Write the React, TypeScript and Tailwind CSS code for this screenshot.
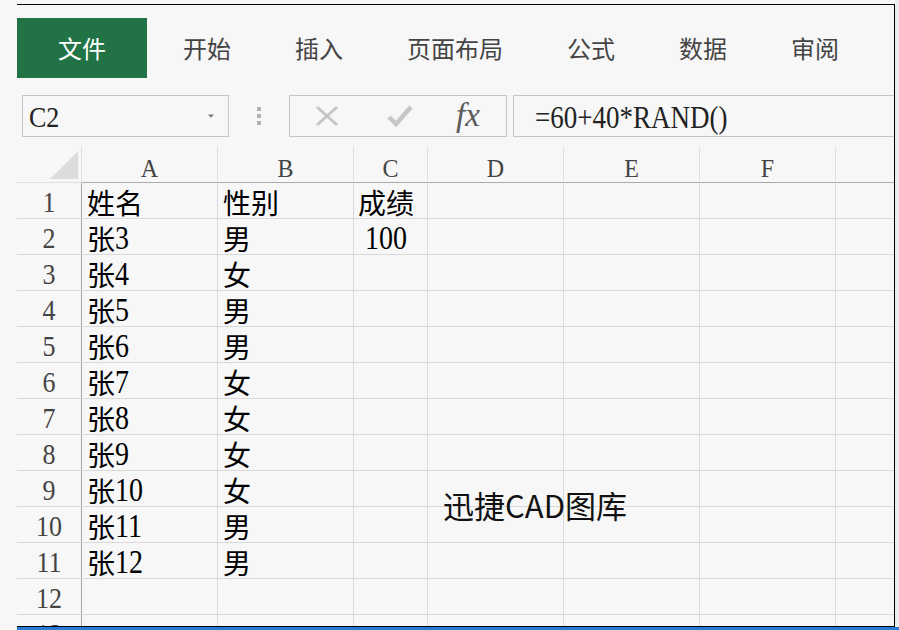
import React from "react";

const SERIF = { fontFamily: '"Liberation Serif", "Noto Sans CJK SC", serif' };

const tabs: { label: string; w: string }[] = [
  { label: "开始", w: "w-[120px]" },
  { label: "插入", w: "w-[104px]" },
  { label: "页面布局", w: "w-[168px]" },
  { label: "公式", w: "w-[104px]" },
  { label: "数据", w: "w-[120px]" },
  { label: "审阅", w: "w-[104px]" },
];

const rows: [string, string, string, string][] = [
  ["1", "姓名", "性别", "成绩"],
  ["2", "张3", "男", "100"],
  ["3", "张4", "女", ""],
  ["4", "张5", "男", ""],
  ["5", "张6", "男", ""],
  ["6", "张7", "女", ""],
  ["7", "张8", "女", ""],
  ["8", "张9", "女", ""],
  ["9", "张10", "女", ""],
  ["10", "张11", "男", ""],
  ["11", "张12", "男", ""],
  ["12", "", "", ""],
  ["13", "", "", ""],
];

// Latin runs are drawn slightly taller, like the condensed serif of the original.
function Tall({ text, k }: { text: string; k: "row" | "cell" | "box" | "col" }) {
  const parts = text.match(/[\u3000-\u9fff]+|[^\u3000-\u9fff]+/g) || [];
  const cls =
    k === "cell"
      ? "inline-block origin-bottom scale-y-[1.18]"
      : k === "row"
      ? "inline-block origin-bottom scale-y-[1.1]"
      : k === "box"
      ? "inline-block origin-bottom scale-y-[1.13]"
      : "inline-block origin-bottom scale-y-[1.06]";
  return (
    <>
      {parts.map((p, i) =>
        /[\u3000-\u9fff]/.test(p) ? (
          <span key={i}>{p}</span>
        ) : (
          <span key={i} className={cls}>
            {p}
          </span>
        )
      )}
    </>
  );
}

function Row({ r }: { r: [string, string, string, string] }) {
  const [n, a, b, c] = r;
  return (
    <div className="flex h-[36px] shrink-0 border-b border-[#d9d9d9]" style={SERIF}>
      <div className="w-[65px] shrink-0 border-r border-[#a6a6a6] text-center text-[26px] leading-[24px] pt-[9px] text-[#444]">
        <Tall text={n} k="row" />
      </div>
      <div className="w-[136px] shrink-0 border-r border-[#d9d9d9] text-[28px] leading-[24px] pt-[10px] pl-[5px] text-black whitespace-nowrap">
        <Tall text={a} k="cell" />
      </div>
      <div className="w-[136px] shrink-0 border-r border-[#d9d9d9] text-[28px] leading-[24px] pt-[10px] pl-[5px] text-black whitespace-nowrap">
        <Tall text={b} k="cell" />
      </div>
      <div
        className={
          "w-[74px] shrink-0 border-r border-[#d9d9d9] text-[28px] leading-[24px] pt-[10px] text-black whitespace-nowrap " +
          (n === "2" ? "pl-[11px]" : "pl-[4px]")
        }
      >
        <Tall text={c} k="cell" />
      </div>
      <div className="w-[136px] shrink-0 border-r border-[#d9d9d9]" />
      <div className="w-[136px] shrink-0 border-r border-[#d9d9d9]" />
      <div className="w-[136px] shrink-0 border-r border-[#d9d9d9]" />
      <div className="flex-1" />
    </div>
  );
}

export default function App() {
  const cols: { l: string; w: string }[] = [
    { l: "A", w: "w-[136px]" },
    { l: "B", w: "w-[136px]" },
    { l: "C", w: "w-[74px]" },
    { l: "D", w: "w-[136px]" },
    { l: "E", w: "w-[136px]" },
    { l: "F", w: "w-[136px]" },
  ];
  return (
    <div className="w-[899px] h-[630px] bg-[#f7f7f7] relative overflow-hidden flex flex-col">
      <div className="flex h-[627px] shrink-0">
        <div className="w-[895px] pl-[17px] pt-[4px] shrink-0">
          <div className="w-[878px] h-[623px] border-t border-r border-b border-black flex flex-col overflow-hidden">
            {/* Ribbon tabs */}
            <div
              className="mt-[13px] h-[60px] flex shrink-0"
              style={{ fontFamily: '"Noto Sans CJK SC", sans-serif' }}
            >
              <div className="w-[130px] h-[60px] bg-[#217346] text-white text-[24px] flex items-center justify-center">
                文件
              </div>
              {tabs.map((t) => (
                <div
                  key={t.label}
                  className={t.w + " h-[60px] text-[#444] text-[24px] flex items-center justify-center"}
                >
                  {t.label}
                </div>
              ))}
            </div>

            {/* Formula bar */}
            <div className="mt-[17px] h-[42px] flex shrink-0">
              <div className="ml-[5px] w-[207px] h-[42px] border border-[#c6c6c6] flex items-start justify-between">
                <span className="pl-[6px] pt-[12px] text-[26px] leading-[24px] text-[#222]" style={SERIF}>
                  <Tall text="C2" k="box" />
                </span>
                <svg width="8" height="5" viewBox="0 0 8 5" className="mt-[18px] mr-[13px]">
                  <polygon points="1,0.5 7,0.5 4,3.8" fill="#7a7a7a" />
                </svg>
              </div>
              <div className="w-[60px] flex flex-col items-center justify-center gap-[3px]">
                <div className="w-[4px] h-[4px] bg-[#b3b3b3]" />
                <div className="w-[4px] h-[4px] bg-[#b3b3b3]" />
                <div className="w-[4px] h-[4px] bg-[#b3b3b3]" />
              </div>
              <div className="w-[218px] h-[42px] border border-[#c6c6c6] flex items-center">
                <svg width="24" height="22" viewBox="0 0 24 22" className="ml-[25px]">
                  <line x1="2" y1="2" x2="22" y2="20" stroke="#c6c6c6" strokeWidth="3" />
                  <line x1="22" y1="2" x2="2" y2="20" stroke="#c6c6c6" strokeWidth="3" />
                </svg>
                <svg width="28" height="24" viewBox="0 0 28 24" className="ml-[47px]">
                  <polyline
                    points="3,13 10,20 25,3"
                    fill="none"
                    stroke="#c6c6c6"
                    strokeWidth="4.5"
                    strokeLinejoin="miter"
                  />
                </svg>
                <span
                  className="ml-[42px] text-[33px] italic leading-none text-[#5a5a5a] -mt-[2px]"
                  style={SERIF}
                >
                  fx
                </span>
              </div>
              <div className="ml-[6px] flex-1 h-[42px] border-t border-b border-l border-[#c6c6c6]">
                <div className="pl-[21px] pt-[11px] text-[27px] leading-[24px] text-[#222] whitespace-nowrap" style={SERIF}>
                  <Tall text="=60+40*RAND()" k="box" />
                </div>
              </div>
            </div>

            {/* Grid */}
            <div className="mt-[9px] flex-1 flex flex-col overflow-hidden">
              <div className="flex h-[37px] shrink-0" style={SERIF}>
                <div className="w-[65px] shrink-0 border-r border-b border-[#e0e0e0] flex items-end justify-end pr-[3px] pb-[3px]">
                  <svg width="28" height="28" viewBox="0 0 28 28">
                    <polygon points="0,28 28,28 28,0" fill="#dcdcdc" />
                  </svg>
                </div>
                {cols.map((c) => (
                  <div
                    key={c.l}
                    className={
                      c.w +
                      " shrink-0 border-r border-[#e0e0e0] border-b border-b-[#ababab] text-center text-[24px] leading-[24px] pt-[11px] text-[#444]"
                    }
                  >
                    <Tall text={c.l} k="col" />
                  </div>
                ))}
                <div className="flex-1 border-b border-[#ababab]" />
              </div>
              {rows.map((r) => (
                <Row key={r[0]} r={r} />
              ))}
            </div>
          </div>
        </div>
        <div className="flex-1 bg-[#ececec]" />
      </div>
      <div className="ml-[17px] flex-1 bg-[#2b7bd0]" />

      <div
        className="absolute left-[443px] top-[489px] text-[31px] leading-[31px] text-[#111] whitespace-nowrap"
        style={{ fontFamily: '"Noto Sans CJK SC", sans-serif' }}
      >
        迅捷CAD图库
      </div>
    </div>
  );
}
